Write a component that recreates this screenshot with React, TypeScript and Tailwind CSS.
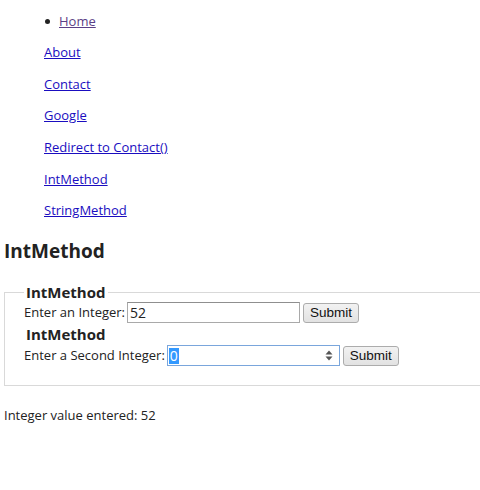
import React from "react";

const links = ["About", "Contact", "Google", "Redirect to Contact()", "IntMethod", "StringMethod"];

function SubmitButton() {
  return (
    <button
      type="button"
      className="h-[20px] w-[56px] rounded-[3px] border border-[#acacac] bg-gradient-to-b from-[#f2f2f2] to-[#e2e2e2] text-[13.5px] leading-none text-[#111] font-['Liberation_Sans',Arial,sans-serif]"
    >
      Submit
    </button>
  );
}

export default function App() {
  return (
    <div className="w-[480px] h-[490px] overflow-hidden bg-white text-[#222] font-['Open_Sans','Noto_Sans',sans-serif] text-[13px]">
      <div className="pt-[5.5px]">
        <div className="h-[31.6px] flex items-center pl-[45px]">
          <span className="w-[5px] h-[5px] rounded-full bg-[#222] mr-[9px]" />
          <a href="#" className="underline text-[#5b3f86]">Home</a>
        </div>
        {links.map((l) => (
          <div key={l} className="h-[31.6px] flex items-center pl-[44px]">
            <a href="#" className="underline text-[#1a0dc0]">{l}</a>
          </div>
        ))}
      </div>
      <h2 className="mt-[12px] ml-[4px] text-[19px] leading-[24px] font-bold text-[#222]">IntMethod</h2>
      <fieldset className="mt-[20px] ml-[4px] w-[500px] border border-[#d9d9d9] pl-[19px] pb-[18px]">
        <legend className="px-[2px] text-[15px] leading-[19px] font-bold text-[#222]">IntMethod</legend>
        <div className="h-[22px] flex items-center">
          <span>Enter an Integer:</span>
          <div className="ml-[2px] h-[21px] w-[173px] border border-[#a9a9a9] border-t-[#8f8f8f] bg-white flex items-center pl-[2px] text-[14px]">
            52
          </div>
          <div className="ml-[3px]">
            <SubmitButton />
          </div>
        </div>
        <div className="px-[2px] h-[21px] leading-[21px] text-[15px] font-bold text-[#222]">IntMethod</div>
        <div className="h-[22px] flex items-center">
          <span>Enter a Second Integer:</span>
          <div className="ml-[2px] h-[21px] w-[173px] border border-[#7aa6dc] bg-white flex items-center pl-[1px] text-[14px]">
            <span className="bg-[#3399ff] text-white leading-[16px] px-[1px]">0</span>
            <span className="flex-1" />
            <svg width="8" height="11" viewBox="0 0 8 11" className="mr-[6px]">
              <path d="M4 0.5 L7.5 4.5 L0.5 4.5 Z" fill="#555" />
              <path d="M4 10.5 L7.5 6.5 L0.5 6.5 Z" fill="#555" />
            </svg>
          </div>
          <div className="ml-[3px]">
            <SubmitButton />
          </div>
        </div>
      </fieldset>
      <p className="mt-[19px] ml-[4px] leading-[20px]">Integer value entered: 52</p>
    </div>
  );
}
